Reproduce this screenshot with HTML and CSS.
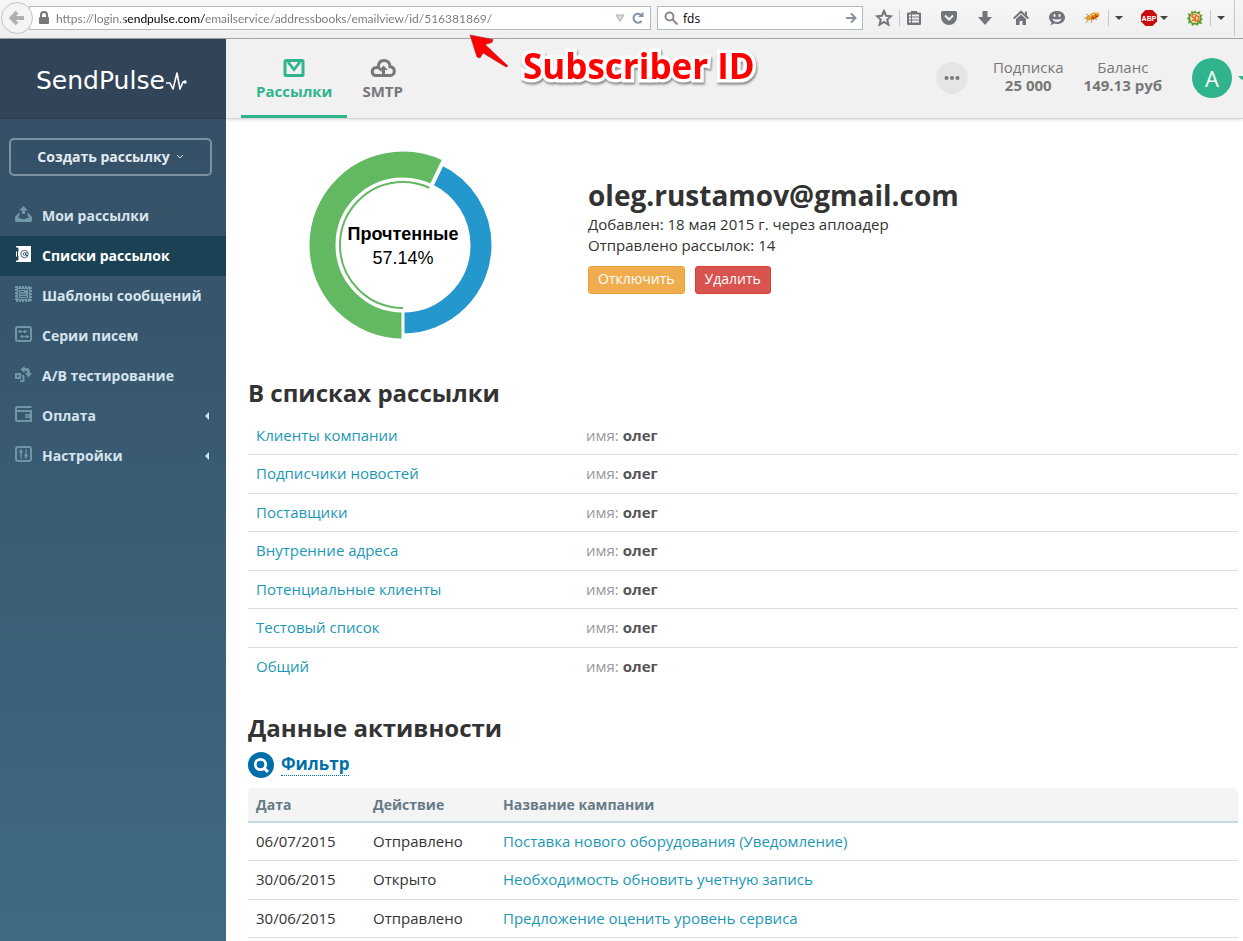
FILE: index.html
```html
<!DOCTYPE html>
<html lang="ru">
<head>
<meta charset="utf-8">
<title>SendPulse</title>
<link rel="stylesheet" href="styles.css">
</head>
<body>
<div class="browser">
  <button class="back" aria-label="Назад"><svg width="18" height="18" viewBox="0 0 18 18"><path d="M9 3 3.500 9 9 15M4 9H16" fill="none" stroke="#b0b0b0" stroke-width="4"/></svg></button>
  <div class="urlbar">
    <svg width="12" height="14" viewBox="0 0 12 14"><path d="M3 7V4a3 3 0 0 1 6 0v3" fill="none" stroke="#777" stroke-width="2"/><rect x="1" y="6" width="10" height="7" rx="1" fill="#777"/></svg>
    <input class="url" aria-label="Адрес" value="https://login.sendpulse.com/emailservice/addressbooks/emailview/id/516381869/">
    <svg width="10" height="8" viewBox="0 0 10 8"><path d="M1 1h8L5 7.500z" fill="#d5dade" stroke="#a9b2ba"/></svg>
    <button class="plain" aria-label="Обновить"><svg width="14" height="14" viewBox="0 0 14 14"><path d="M10.500 10A4.500 4.500 0 1 1 10 3.800" fill="none" stroke="#8494a2" stroke-width="2"/><path d="M7 6h5.500V.8z" fill="#8494a2"/></svg></button>
  </div>
  <div class="search">
    <svg width="14" height="14" viewBox="0 0 14 14"><circle cx="5.500" cy="5.500" r="4" fill="none" stroke="#8a8a8a" stroke-width="2"/><path d="m8.500 8.500 5 5" stroke="#8a8a8a" stroke-width="2"/></svg>
    <input aria-label="Поиск" value="fds">
    <button class="plain" aria-label="Найти"><svg width="12" height="12" viewBox="0 0 12 12"><path d="M1 6h9M6 1.500 10.500 6 6 10.500" fill="none" stroke="#8494a2" stroke-width="2"/></svg></button>
  </div>
  <div class="tools">
    <button class="plain t-star" aria-label="Закладка"><svg width="18" height="18" viewBox="0 0 18 18"><path d="m9 2 2.100 4.700 5 .5-3.800 3.400 1.100 5L9 13l-4.400 2.600 1.100-5L1.900 7.200l5-.5z" fill="none" stroke="#72757a" stroke-width="2"/></svg></button>
    <i class="sep"></i>
    <button class="plain t-list" aria-label="Список закладок"><svg width="16" height="16" viewBox="0 0 16 16"><path d="M5 2.500V1h6v1.500h3a1 1 0 0 1 1 1V14a1 1 0 0 1-1 1H2a1 1 0 0 1-1-1V3.500a1 1 0 0 1 1-1z" fill="#72757a"/><path d="M3 5.500h2M6 5.500h7M3 8.500h2M6 8.500h7M3 11.500h2M6 11.500h7" stroke="#f3f3f3" stroke-width="2"/></svg></button>
    <button class="plain t-item first" aria-label="Pocket"><svg width="16" height="16" viewBox="0 0 16 16"><path d="M1.500 1h13a1.500 1.500 0 0 1 1.500 1.500V7a8 8 0 0 1-16 0V2.500A1.500 1.500 0 0 1 1.500 1z" fill="#72757a"/><path d="m4 5.500 4 4 4-4" fill="none" stroke="#f3f3f3" stroke-width="2"/></svg></button>
    <button class="plain t-item" aria-label="Загрузки"><svg width="16" height="16" viewBox="0 0 16 16"><path d="M5.500 1h5v6H15l-7 8-7-8h4.500z" fill="#72757a"/></svg></button>
    <button class="plain t-item" aria-label="Домой"><svg width="16" height="16" viewBox="0 0 16 16"><path d="M.7 8.500 8 1.700l7.300 6.800" fill="none" stroke="#72757a" stroke-width="2"/><path d="M12 1.500h2v5l-2-2zM3 9l5-4.600L13 9v6H9.500v-4h-3v4H3z" fill="#72757a"/></svg></button>
    <button class="plain t-item" aria-label="Чат"><svg width="16" height="16" viewBox="0 0 16 16"><path d="M8 1c4.500 0 8 2.700 8 6.500S12.500 14 8 14c-1 0-2-.1-2.900-.4C4 14.700 2.200 15 1 15c1-.8 1.400-1.700 1.500-2.700C.9 11 0 9.400 0 7.500 0 3.700 3.500 1 8 1z" fill="#72757a"/><rect x="4.500" y="4" width="2" height="3" rx="1" fill="#f3f3f3"/><rect x="9.500" y="4" width="2" height="3" rx="1" fill="#f3f3f3"/><path d="M3.500 8.500c2 1.300 7 1.300 9 0C12 13 4 13 3.500 8.500z" fill="#f3f3f3"/></svg></button>
    <button class="plain t-bug" aria-label="Firebug"><svg width="16" height="16" viewBox="0 0 16 16"><path d="M2 4l3 2M0 8l4 1M2 13l2-3M7 13l1-3M13 10l-2-1.500" stroke="#a08050" stroke-width=".8"/><ellipse cx="10" cy="6" rx="5.600" ry="3.400" transform="rotate(-22 10 6)" fill="#e8861a"/><path d="M6 6l8-3.500" stroke="#ffd267" stroke-width="1.500"/><path d="M7 9l7-3" stroke="#b34708"/><circle cx="4.500" cy="8" r="2.500" fill="#d8a22c"/><path d="M8 5l1.500 3.500M11 3.500l1.500 3.500" stroke="#8c3808" stroke-width=".8"/></svg></button>
    <i class="sep"></i>
    <button class="plain t-drop" aria-label="Меню Firebug"><i class="down"></i></button>
    <button class="plain t-abp" aria-label="Adblock Plus"><svg width="18" height="18" viewBox="0 0 18 18"><path d="M5.500 1h7L17 5.500v7L12.500 17h-7L1 12.500v-7z" fill="#c70d0d"/><text class="abp" x="9" y="12" text-anchor="middle">ABP</text></svg></button>
    <button class="plain t-abpdrop" aria-label="Меню Adblock"><i class="down"></i></button>
    <button class="plain t-flower" aria-label="Расширение"><svg width="16" height="16" viewBox="0 0 16 16"><path d="m8 0 1.500 2.500L13.300 1l-.6 3.500 3 .2-1.500 2.800L16 9.500l-2 1 1 3.500-3.500-.5L10.500 16 8 14.200 5 16l-.8-3L1 13.500l.8-3L0 8l2-1.500L.5 3.500 4 3.700 4.500.8 7 2z" fill="#5d9c2b"/><path d="m8 3 4.500 1.500L13 9l-3 4-5-.5L3 8l1.500-4z" fill="#fbe3bb"/><path d="M7.500 4.500c-3-.5-3.500 2.500-1 3s1.500 3.500-1.500 2.500M9 5l3 2-1.500 4.500-2.500-1z" fill="none" stroke="#e06a20" stroke-width="1.400"/></svg></button>
    <i class="sep"></i>
    <button class="plain t-drop" aria-label="Меню расширения"><i class="down"></i></button>
    <i class="edge"></i>
  </div>
</div>

<div class="app">
  <aside class="side">
    <a class="logo" href="#">SendPulse<svg width="21" height="20" viewBox="0 0 21 20"><path d="M0 12h4l3 6L11 2l3 16 3-7h2" fill="none" stroke="#fff" stroke-width="1.600" stroke-linejoin="round"/><circle cx="19" cy="11" r="1.700" fill="#fff"/></svg></a>
    <button class="create">Создать рассылку <svg width="8" height="5" viewBox="0 0 8 5"><path d="m1 1 3 3 3-3" fill="none" stroke="#d5e0e8"/></svg></button>
    <nav class="nav">
      <a href="#"><svg class="ic" viewBox="0 0 17 16"><path d="M8.500 0 13 4.500h-2.800V8H6.800V4.500H4z"/><path d="M4.500 6 0 11v3.500A1.500 1.500 0 0 0 1.500 16h14a1.500 1.500 0 0 0 1.500-1.500V11l-4.500-5v3.500L14 12h-2.500l-1 1h-4l-1-1H3l1.500-2.500z"/></svg>Мои рассылки</a>
      <a class="on" href="#"><svg class="ic" viewBox="0 0 17 16"><path d="M3 0h13v16H3zM1 0h3v1.500H1zM1 5h1v6H1zM1 14.500h3V16H1z"/><circle cx="9.500" cy="8" r="3.700" fill="none" stroke="#1b4155" stroke-width=".8"/><circle cx="9.500" cy="8" r="1.300" fill="none" stroke="#1b4155" stroke-width=".8"/><path d="M11 6v3.500h2M1 3h3M1 5h3M1 11h3M1 13h3" fill="none" stroke="#1b4155" stroke-width=".8"/></svg>Списки рассылок</a>
      <a href="#"><svg class="ic" viewBox="0 0 17 16"><path d="M1 1h15v14H1z" fill="none" stroke="#6f97a5" stroke-width="2" stroke-dasharray="2 1"/><path d="M1.500 1.500h14v13h-14z"/><path d="M3.500 3.500h10v9h-10zM5 5.500h4M5 8h6M5 10.500h7" fill="none" stroke="#38556b" stroke-width=".9"/></svg>Шаблоны сообщений</a>
      <a href="#"><svg class="ic" viewBox="0 0 17 16"><rect x="1" y="1" width="15" height="14" rx="2" fill="none" stroke="#6f97a5" stroke-width="2"/><path d="M3.500 5.500h8M6 10.500h8" stroke="#6f97a5"/><circle cx="5" cy="5.500" r="1.500"/><circle cx="10" cy="5.500" r="1.500"/><circle cx="7" cy="10.500" r="1.500"/><circle cx="12" cy="10.500" r="1.500"/></svg>Серии писем</a>
      <a href="#"><svg class="ic" viewBox="0 0 17 16"><path d="M1 8h4v4H1zM8.500 10v5H5M9 10H7" fill="none" stroke="#6f97a5" stroke-width="2"/><path d="M9.500 0v7L5.500 3.500zM8 2h3.500a3.500 3.500 0 0 1 3.500 3.500V7h2l-3.500 4.500L10 7h2V5.500a.5.500 0 0 0-.5-.5H8z"/></svg>A/B тестирование</a>
      <a href="#"><svg class="ic" viewBox="0 0 17 16"><path d="M16.500 1H2.500A1.500 1.500 0 0 0 1 2.500V13.500A1.500 1.500 0 0 0 2.500 15H16V5H1" fill="none" stroke="#6f97a5" stroke-width="2"/><path d="M10.500 8H16v4h-5.500z"/><path d="M12 9.500h1.500v1H12z" fill="#38556b"/></svg>Оплата<i class="left"></i></a>
      <a href="#"><svg class="ic" viewBox="0 0 17 16"><rect x="1" y="1" width="15" height="14" rx="2" fill="none" stroke="#6f97a5" stroke-width="2"/><path d="M6 3v10M11 3v10" stroke="#6f97a5" stroke-width="1.300"/><circle cx="6" cy="6" r="1.700"/><circle cx="11" cy="9.500" r="1.700"/></svg>Настройки<i class="left"></i></a>
    </nav>
  </aside>

  <div class="page">
    <header class="head">
      <a class="tab on" href="#"><svg width="22" height="18" viewBox="0 0 22 18"><rect x="2" y="1.500" width="18" height="15" rx="1" fill="none" stroke="#2fb48d" stroke-width="3"/><path d="m5 3 6 7.500 6-7.500" fill="none" stroke="#2fb48d" stroke-width="2.800"/></svg>Рассылки</a>
      <a class="tab" href="#"><svg width="26" height="18" viewBox="0 0 26 18"><path d="M6 16.500a4 4 0 0 1-.6-7.900c1.300-.4 2.500-.2 3.500.5C7.500 5.500 9.500 1.500 14 1.500c3.500 0 6 2.300 6 6.300 2.500.3 4.300 2 4.300 4.400 0 2.500-1.800 4.300-4.300 4.300z" fill="none" stroke="#777" stroke-width="3"/><path d="m13.500 6.500 4.500 4.500h-3v4h-3v-4H9z" fill="#777"/></svg>SMTP</a>
      <button class="more" aria-label="Ещё"><svg width="16" height="6" viewBox="0 0 16 6"><circle cx="2.500" cy="3" r="2"/><circle cx="8" cy="3" r="2"/><circle cx="13.500" cy="3" r="2"/></svg></button>
      <div class="stat plan">Подписка<b>25 000</b></div>
      <div class="stat">Баланс<b>149.13 руб</b></div>
      <button class="user" aria-label="Профиль"><span class="avatar">A</span><i class="caret"></i></button>
    </header>
    <main class="main">
      <section class="profile">
        <div class="chart">
          <svg width="190" height="190" viewBox="0 0 190 190">
            <g fill="none" transform="rotate(90 95 95)">
              <circle cx="95" cy="95" r="80.500" pathLength="360" stroke="#62b962" stroke-width="26" stroke-dasharray="205.700 360"/>
              <circle cx="95" cy="95" r="63" pathLength="360" stroke="#62b962" stroke-width="2" stroke-dasharray="204.700 360"/>
              <circle cx="95" cy="95" r="78" pathLength="360" stroke="#2497cc" stroke-width="21" stroke-dasharray="154.300 360" stroke-dashoffset="-205.700"/>
              <path d="M160 95h30" stroke="#fff" stroke-width="3"/>
              <path d="M160 95h30" stroke="#fff" stroke-width="4" transform="rotate(205.700 95 95)"/>
            </g>
          </svg>
          <div class="label"><b>Прочтенные</b><span>57.14%</span></div>
        </div>
        <div class="info">
          <h1>oleg.rustamov@gmail.com</h1>
          <p>Добавлен: 18 мая 2015 г. через аплоадер</p>
          <p>Отправлено рассылок: 14</p>
          <div class="acts"><button class="btn warn">Отключить</button><button class="btn danger">Удалить</button></div>
        </div>
      </section>

      <h2>В списках рассылки</h2>
      <table class="lists">
        <tr><td><a href="#">Клиенты компании</a></td><td>имя: <b>олег</b></td></tr>
        <tr><td><a href="#">Подписчики новостей</a></td><td>имя: <b>олег</b></td></tr>
        <tr><td><a href="#">Поставщики</a></td><td>имя: <b>олег</b></td></tr>
        <tr><td><a href="#">Внутренние адреса</a></td><td>имя: <b>олег</b></td></tr>
        <tr><td><a href="#">Потенциальные клиенты</a></td><td>имя: <b>олег</b></td></tr>
        <tr><td><a href="#">Тестовый список</a></td><td>имя: <b>олег</b></td></tr>
        <tr><td><a href="#">Общий</a></td><td>имя: <b>олег</b></td></tr>
      </table>

      <h2 class="second">Данные активности</h2>
      <div class="filter">
        <svg width="26" height="26" viewBox="0 0 26 26"><circle cx="13" cy="13" r="13" fill="#006fa9"/><circle cx="12.500" cy="12.500" r="5.200" fill="none" stroke="#fff" stroke-width="2.800"/><path d="m15.500 15.500 4.500 4.500" stroke="#fff" stroke-width="3"/></svg>
        <a href="#">Фильтр</a>
      </div>
      <table class="log">
        <thead><tr><th class="c1">Дата</th><th class="c2">Действие</th><th>Название кампании</th></tr></thead>
        <tbody>
          <tr><td>06/07/2015</td><td>Отправлено</td><td><a href="#">Поставка нового оборудования (Уведомление)</a></td></tr>
          <tr><td>30/06/2015</td><td>Открыто</td><td><a href="#">Необходимость обновить учетную запись</a></td></tr>
          <tr><td>30/06/2015</td><td>Отправлено</td><td><a href="#">Предложение оценить уровень сервиса</a></td></tr>
        </tbody>
      </table>
    </main>
  </div>
</div>

<div class="note">
  <svg width="42" height="36" viewBox="0 0 42 36"><path d="M2 2 25 6.500l-1 3-7 2L40 33l-2 1-23-14-3 5-3-1z" fill="#f00" stroke="#a33" stroke-width=".7" stroke-linejoin="round"/></svg>
  <span>Subscriber ID</span>
</div>
</body>
</html>
```
FILE: styles.css
```css
* { box-sizing: border-box; }
body {
  margin: 0;
  min-height: 100vh;
  display: flex;
  flex-direction: column;
  font: 15px/1.42857 "Open Sans", sans-serif;
  color: #333;
  background: #fff;
  overflow-x: hidden;
}
a { color: #1b98b5; text-decoration: none; }
button, input { font-family: inherit; border: 0; padding: 0; background: none; }
button { cursor: pointer; }
svg { flex: none; }

/* Browser bar */
.browser {
  display: flex;
  align-items: center;
  height: 39px;
  padding-bottom: 2px;
  border-bottom: 1px solid #999;
  background: linear-gradient(#f6f6f6, #efefef);
}
.plain { display: flex; align-items: center; justify-content: center; }
.back {
  position: relative;
  z-index: 1;
  width: 32px;
  height: 32px;
  margin: 0 -4px 0 1px;
  border: 1px solid #c4c4c4;
  border-radius: 50%;
  background: #f4f4f4;
  display: flex;
  align-items: center;
  justify-content: center;
}
.urlbar, .search {
  display: flex;
  align-items: center;
  height: 24px;
  border: 1px solid #b0bcc5;
  background: #fff;
}
.urlbar { flex: 1; gap: 6px; padding: 0 5px 0 8px; margin-right: 6px; }
.search { width: 206px; padding: 0 5px 0 6px; gap: 5px; }
.urlbar input, .search input {
  flex: 1;
  min-width: 0;
  height: 20px;
  font-size: 12px;
  color: #000;
  outline: 0;
}
.urlbar .url {
  font-family: Lato, sans-serif;
  font-size: 12px;
  color: transparent;
  background: linear-gradient(90deg, #777 69px, #000 69px, #000 149px, #777 149px);
  -webkit-background-clip: text;
  background-clip: text;
}
.tools { display: flex; align-items: center; width: 380px; padding-left: 6px; }
.sep { width: 1px; height: 16px; background: #c3c8cc; }
.edge { width: 1px; height: 36px; margin-left: 4px; background: #c3c8cc; }
.t-star { width: 30px; }
.t-list { width: 28px; }
.t-item { width: 36px; }
.t-item.first { margin-left: 3px; }
.t-bug { width: 33px; }
.t-drop { width: 19px; height: 20px; }
.t-abp { width: 20px; margin-left: 11px; }
.t-abpdrop { width: 10px; height: 20px; }
.t-flower { width: 26px; margin: 0 2px 0 13px; }
.down {
  border: 4px solid transparent;
  border-top-color: #444;
  border-bottom: 0;
}
.abp { font: 700 7px "Liberation Sans", sans-serif; fill: #fff; }

/* Frame */
.app { display: flex; flex: 1; }
.side {
  position: relative;
  z-index: 1;
  width: 226px;
  flex: none;
  background: linear-gradient(#355066 10%, #3f6a84);
}
.page { flex: 1; min-width: 0; }

/* Sidebar */
.logo {
  display: flex;
  align-items: center;
  gap: 1px;
  height: 80px;
  padding: 4px 0 0 36px;
  font: 25px "DejaVu Sans", sans-serif;
  color: #fff;
  background: #324558;
  border-bottom: 1px solid #2c3f50;
}
.create {
  display: flex;
  align-items: center;
  justify-content: center;
  gap: 6px;
  width: 203px;
  height: 38px;
  margin: 19px 9px 20px;
  padding-bottom: 2px;
  border: 2px solid #7b919f;
  border-radius: 5px;
  color: #e1ebf2;
  font-size: 14px;
  font-weight: 700;
}
.nav a {
  display: flex;
  align-items: center;
  height: 40px;
  padding: 0 17px 0 15px;
  font-size: 14px;
  font-weight: 700;
  color: #d6e4ed;
}
.nav .on { background: #1b4155; color: #fff; }
.ic { width: 17px; height: 16px; margin: 0 10px 4px 0; fill: #6f97a5; }
.on .ic { fill: #fff; }
.left {
  margin-left: auto;
  border: 4px solid transparent;
  border-right-color: #d6e4ed;
  border-left: 0;
}

/* Header */
.head {
  display: flex;
  align-items: center;
  height: 80px;
  padding: 0 0 2px 15px;
  overflow: hidden;
  background: #f1f1f1;
  border-bottom: 1px solid #d5d5d5;
  box-shadow: 0 1px 3px #ddd;
}
.tab {
  display: flex;
  flex-direction: column;
  align-items: center;
  align-self: flex-start;
  gap: 4px;
  height: 79px;
  padding: 20px 15px 0;
  font-size: 15px;
  font-weight: 700;
  color: #777;
}
.tab.on { color: #2fb48d; border-bottom: 3px solid #2fb48d; }
.more {
  display: flex;
  align-items: center;
  justify-content: center;
  width: 32px;
  height: 32px;
  margin: 0 25px 0 auto;
  border-radius: 50%;
  background: #e5e5e5;
  fill: #777;
}
.stat { text-align: center; line-height: 18px; color: #777; padding-bottom: 4px; }
.stat b { display: block; }
.plan { margin-right: 20px; }
.user { display: flex; align-items: center; gap: 6px; margin: 0 -3px 0 30px; flex: none; }
.avatar {
  width: 40px;
  border-radius: 50%;
  background: #2fb48d;
  color: #fff;
  font-size: 22px;
  line-height: 40px;
}
.caret { border: 4px solid transparent; border-top-color: #2fb48d; border-bottom: 0; }

/* Content */
.main { padding: 31px 5px 0 22px; }
.profile { display: flex; padding-left: 60px; }
.chart { display: grid; margin-right: 90px; }
.chart > * { grid-area: 1 / 1; }
.label {
  align-self: center;
  display: flex;
  flex-direction: column;
  align-items: center;
  padding-top: 2px;
  font: 18px/24px "Liberation Sans", sans-serif;
  color: #000;
}
h1 { margin: 28px 0 2px; font-size: 28px; line-height: 34px; }
p { margin: 0; }
.acts { display: flex; gap: 10px; margin-top: 9px; }
.btn { height: 28px; padding: 0 9px 2px; border: 1px solid; border-radius: 3px; color: #fff; font-size: 14px; }
.warn { background: #f0ad4e; border-color: #eea236; }
.danger { background: #d9534f; border-color: #d43f3a; }

h2 { margin: 38px 0 9px; font-size: 24px; line-height: 30px; }
h2.second { margin-top: 28px; }
table { width: 100%; border-collapse: separate; border-spacing: 0; table-layout: fixed; }
td { padding: 8px; border-bottom: 1px solid #ddd; }
.lists td:first-child { width: 33.333%; }
.lists td + td { color: #999; }
.lists b { color: #555; }
.lists tr:last-child td { border-bottom: 0; }
.filter { display: flex; align-items: center; gap: 7px; margin-bottom: 10px; }
.filter a { font-size: 17px; line-height: 22px; font-weight: 700; color: #006fa9; border-bottom: 1px dotted; }
th {
  padding: 6px 8px;
  text-align: left;
  font-size: 14px;
  line-height: 21px;
  color: #667b86;
  background: #f4f4f4;
  border-bottom: 2px solid #c3d9e6;
}
th:first-child { border-top-left-radius: 5px; }
th:last-child { border-top-right-radius: 5px; }
.c1 { width: 117px; }
.c2 { width: 130px; }

/* Callout drawn over the page */
.note { position: absolute; left: 468px; top: 33px; display: flex; gap: 13px; pointer-events: none; }
.note span {
  font: 700 35px/66px "Open Sans", sans-serif;
  color: #f00;
  -webkit-text-stroke: 7px #fff;
  paint-order: stroke fill;
  filter: drop-shadow(1px 2px 1px #888);
}
```
